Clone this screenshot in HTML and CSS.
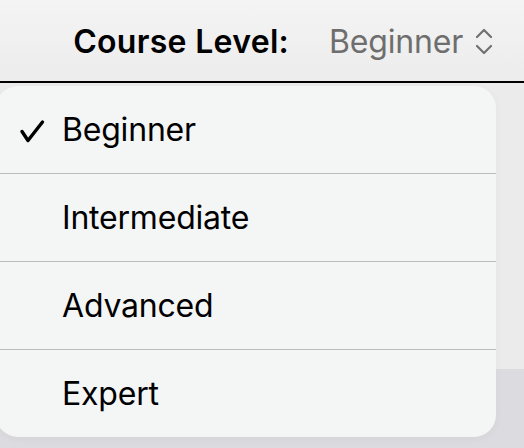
FILE: index.html
```html
<!DOCTYPE html>
<html>
<head>
<meta charset="utf-8">
<link rel="stylesheet" href="styles.css">
</head>
<body>
<header class="bar">
  <span class="label">Course Level:</span>
  <span class="value">Beginner</span>
  <svg class="chev" width="18" height="28" viewBox="0 0 18 28"><path d="M2 9 L9 2 L16 9 M2 18 L9 25 L16 18" fill="none" stroke="#707070" stroke-width="2.2" stroke-linecap="round" stroke-linejoin="round"/></svg>
</header>
<main class="stage">
  <ul class="menu">
    <li class="item">
      <svg class="check" width="26" height="24" viewBox="0 0 26 24"><path d="M3 12.5 L9 21.5 L23.5 3" fill="none" stroke="#000" stroke-width="3.4" stroke-linecap="round" stroke-linejoin="round"/></svg>
      <span>Beginner</span>
    </li>
    <li class="item"><span>Intermediate</span></li>
    <li class="item"><span>Advanced</span></li>
    <li class="item"><span>Expert</span></li>
  </ul>
</main>
</body>
</html>
```

FILE: styles.css
```css
html, body {
  margin: 0;
  padding: 0;
}
body {
  width: 524px;
  height: 448px;
  overflow: hidden;
  font-family: Inter, "Liberation Sans", sans-serif;
  background: #dcdce0;
}
.bar {
  height: 83px;
  box-sizing: border-box;
  border-bottom: 2px solid #000;
  background: linear-gradient(to bottom, #f4f4f4, #ececec);
  display: flex;
  align-items: center;
  justify-content: flex-end;
  padding-right: 31px;
  padding-top: 2px;
}
.label {
  font-size: 32px;
  font-weight: 600;
  color: #000;
  letter-spacing: 0.3px;
}
.value {
  font-size: 32px;
  color: #6e6e6e;
  margin-left: 40px;
  letter-spacing: -0.2px;
}
.chev {
  margin-left: 12px;
}
.stage {
  height: 365px;
  background: linear-gradient(to bottom, #ebebeb 0, #ebebeb 286px, #dcdce0 286px);
  padding-top: 3px;
  box-sizing: border-box;
}
.menu {
  list-style: none;
  margin: 0 0 0 -4px;
  padding: 0;
  width: 500px;
  background: #f4f5f5;
  border-radius: 22px;
  overflow: hidden;
  box-shadow: 0 2px 8px rgba(0,0,0,0.04);
}
.item {
  height: 87px;
  display: flex;
  align-items: center;
  padding-left: 66px;
  position: relative;
  font-size: 32px;
  color: #000;
  letter-spacing: -0.2px;
}
.item + .item {
  border-top: 1px solid #bcbcbc;
}
.check {
  position: absolute;
  left: 23px;
  top: 33px;
}
```
